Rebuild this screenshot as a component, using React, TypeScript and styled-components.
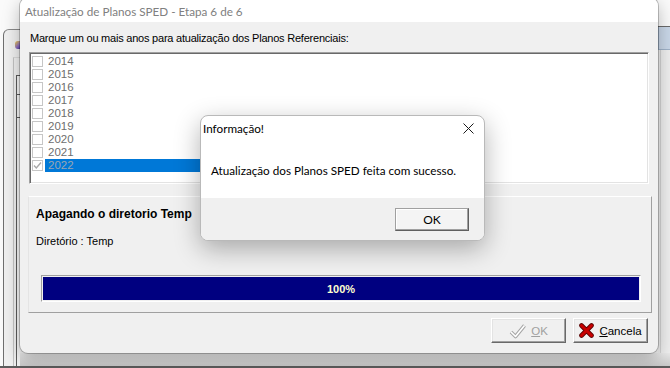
import React from "react";
import styled, { createGlobalStyle } from "styled-components";

const GlobalStyle = createGlobalStyle`
  html, body {
    margin: 0;
    padding: 0;
  }
  body {
    width: 670px;
    height: 368px;
    overflow: hidden;
    background: #f0f0f0;
  }
`;

const Screen = styled.div`
  position: relative;
  width: 670px;
  height: 368px;
  overflow: hidden;
  font-family: "Liberation Sans", Arial, sans-serif;
`;

/* ---------- application behind the dialogs ---------- */

const Backdrop = styled.div`
  display: grid;
  width: 100%;
  height: 100%;
  grid-template-columns: 20px 1fr 12px;
  grid-template-rows: 1fr 13px 2px;
  grid-template-areas:
    "left mid right"
    "left shade shade"
    "line line line";
  background: #f0f0f0;
`;

const LeftRail = styled.div`
  grid-area: left;
  display: flex;
  flex-direction: column;
  background: #fafafa;
`;

const RailTab = styled.div`
  flex: 1;
  margin: 29px 0 0 3px;
  display: flex;
  flex-direction: column;
  padding-left: 9px;
  background: #f0f0f0;
  border-left: 1px solid #6f6f6f;
  border-top: 1px solid #8a8a8a;
  border-top-left-radius: 6px;
`;

const RailIcon = styled.div`
  width: 6px;
  height: 8px;
  margin: 11px 0 0 2px;
  border-radius: 3px 0 0 3px;
  background: linear-gradient(135deg, #f2d24a 0%, #8a6bc4 60%, #4b3a8c 100%);
`;

const RailPanel = styled.div`
  flex: 1;
  margin-top: 8px;
  display: flex;
  flex-direction: column;
  border-left: 1px solid #c4c4c4;
  border-top: 1px solid #dadada;
  padding-left: 2px;
`;

const RailGrid = styled.div`
  flex: 1;
  margin-top: 17px;
  display: flex;
  flex-direction: column;
  gap: 22px;
  padding-top: 18px;
  border-left: 1px solid #5a5a5a;
  border-top: 1px solid #5a5a5a;
  background: #f4f4f4;
`;

const RailTick = styled.div`
  width: 3px;
  height: 1px;
  background: #5a5a5a;
`;

const RightRail = styled.div`
  grid-area: right;
  display: flex;
  flex-direction: column;
  background: #ececec;
`;

const RightTop = styled.div`
  height: 26px;
  background: #fafafa;
  border-bottom: 1px solid #6a6a6a;
`;

const RightTab = styled.div`
  height: 22px;
  background: #c9d7e8;
  border-left: 1px solid #9fb2c8;
  border-bottom: 1px solid #9fb2c8;
`;

const RightBody = styled.div`
  flex: 1;
  margin-left: 2px;
  border-left: 1px solid #d4d4d4;
  background: #eeeeee;
`;

const Shade = styled.div`
  grid-area: shade;
  background: linear-gradient(to bottom, #e9e9e9, #c9c9c9);
`;

const BottomLine = styled.div`
  grid-area: line;
  background: #5c5c5c;
`;

/* ---------- main wizard window ---------- */

const Window = styled.div`
  position: absolute;
  left: 20px;
  top: -2px;
  width: 638px;
  height: 355px;
  display: flex;
  flex-direction: column;
  border-radius: 8px;
  overflow: hidden;
  background: #f0f0f0;
  box-shadow: 0 0 0 1px rgba(0, 0, 0, 0.22), 0 6px 18px rgba(0, 0, 0, 0.28);
`;

const TitleBar = styled.div`
  height: 24px;
  flex: none;
  display: flex;
  align-items: center;
  padding: 2px 0 0 5px;
  box-sizing: border-box;
  background: #ffffff;
  color: #808080;
  font-family: Lato, "Noto Sans", sans-serif;
  font-size: 11.7px;
`;

const Body = styled.div`
  flex: 1;
  display: flex;
  flex-direction: column;
  font-size: 11px;
  color: #000;
`;

const Prompt = styled.div`
  margin: 9px 0 0 10px;
  line-height: 14px;
  letter-spacing: -0.22px;
`;

const ListBox = styled.div`
  margin: 7px 9px 0 9px;
  height: 132px;
  box-sizing: border-box;
  padding: 2px 2px;
  background: #ffffff;
  border: 1px solid;
  border-color: #a0a0a0 #ffffff #ffffff #a0a0a0;
  box-shadow: inset 1px 1px 0 #696969, inset -1px -1px 0 #e3e3e3;
  overflow: hidden;
`;

const ListRow = styled.div`
  height: 13px;
  display: flex;
  align-items: center;
`;

const CheckBox = styled.div`
  width: 11px;
  height: 11px;
  flex: none;
  box-sizing: border-box;
  border: 1px solid #c6c6c6;
  background: #ffffff;
  display: flex;
  align-items: center;
  justify-content: center;
`;

const YearLabel = styled.div<{ $selected?: boolean }>`
  margin-left: 2px;
  width: 300px;
  height: 13px;
  line-height: 13px;
  padding-left: 3px;
  font-size: 11.5px;
  color: ${(p) => (p.$selected ? "#9aa6b2" : "#6e6e6e")};
  background: ${(p) => (p.$selected ? "#0078d7" : "transparent")};
`;

const Panel = styled.div`
  margin: 12px 6px 0 8px;
  height: 117px;
  box-sizing: border-box;
  padding: 10px 10px 0 7px;
  display: flex;
  flex-direction: column;
  border: 1px solid;
  border-color: #ffffff #a0a0a0 #a0a0a0 #e4e4e4;
`;

const PanelTitle = styled.div`
  font-weight: bold;
  font-size: 12px;
  line-height: 14px;
`;

const PanelText = styled.div`
  margin-top: 13px;
  line-height: 14px;
`;

const Progress = styled.div`
  margin: 27px 0 0 5px;
  height: 27px;
  box-sizing: border-box;
  padding: 1px;
  border: 1px solid;
  border-color: #a0a0a0 #ffffff #ffffff #a0a0a0;
`;

const ProgressFill = styled.div`
  height: 100%;
  display: flex;
  align-items: center;
  justify-content: center;
  background: #000080;
  color: #ffffd0;
  font-weight: bold;
  font-size: 11px;
`;

const ButtonRow = styled.div`
  margin-top: 5px;
  padding-right: 10px;
  display: flex;
  justify-content: flex-end;
  gap: 7px;
`;

const ClassicButton = styled.button<{ $disabled?: boolean }>`
  width: 75px;
  height: 25px;
  box-sizing: border-box;
  padding: 0;
  display: flex;
  align-items: center;
  justify-content: center;
  gap: 5px;
  background: #f0f0f0;
  border: 1px solid;
  border-color: #ffffff #696969 #696969 #ffffff;
  box-shadow: inset -1px -1px 0 #a0a0a0, inset 1px 1px 0 #e3e3e3;
  font-family: "Liberation Sans", Arial, sans-serif;
  font-size: 11.5px;
  color: ${(p) => (p.$disabled ? "#a0a0a0" : "#000")};
`;

/* ---------- message box ---------- */

const MessageBox = styled.div`
  position: absolute;
  left: 200px;
  top: 115px;
  width: 285px;
  height: 126px;
  box-sizing: border-box;
  display: flex;
  flex-direction: column;
  border: 1px solid #b9b9b9;
  border-radius: 8px;
  overflow: hidden;
  background: #ffffff;
  box-shadow: 0 8px 26px rgba(0, 0, 0, 0.3);
  font-family: Lato, "Noto Sans", sans-serif;
  font-size: 11.7px;
  color: #000;
`;

const MsgTitle = styled.div`
  height: 24px;
  flex: none;
  display: flex;
  align-items: center;
  justify-content: space-between;
  padding: 0 10px 0 2px;
`;

const MsgContent = styled.div`
  height: 58px;
  flex: none;
  padding: 23px 0 0 10px;
  box-sizing: border-box;
`;

const MsgFooter = styled.div`
  flex: 1;
  display: flex;
  justify-content: flex-end;
  align-items: flex-start;
  padding: 10px 15px 0 0;
  background: #f0f0f0;
`;

const MsgButton = styled.button`
  width: 74px;
  height: 23px;
  box-sizing: border-box;
  padding: 0;
  background: #f4f4f4;
  border: 1px solid;
  border-color: #a0a0a0 #5f5f5f #5f5f5f #a0a0a0;
  box-shadow: inset -1px -1px 0 #a0a0a0, inset 1px 1px 0 #ffffff;
  font-family: Lato, "Noto Sans", sans-serif;
  font-size: 12px;
  color: #000;
`;

const years = ["2014", "2015", "2016", "2017", "2018", "2019", "2020", "2021", "2022"];

const CheckMark = () => (
  <svg width="9" height="9" viewBox="0 0 9 9">
    <path d="M1 4.5 L3.3 7 L8 1.5" fill="none" stroke="#a8a8a8" strokeWidth="1.4" />
  </svg>
);

const OkGlyph = () => (
  <svg width="17" height="16" viewBox="0 0 17 16">
    <path d="M2 9 L6.5 13.5 L15.5 2.5" fill="none" stroke="#a6a6a6" strokeWidth="3.6" strokeLinejoin="round" />
    <path d="M2 9 L6.5 13.5 L15.5 2.5" fill="none" stroke="#ffffff" strokeWidth="1.6" strokeLinejoin="round" />
  </svg>
);

const CancelGlyph = () => (
  <svg width="15" height="15" viewBox="0 0 15 15">
    <path d="M2.5 2.5 L12.5 12.5 M12.5 2.5 L2.5 12.5" stroke="#5a0000" strokeWidth="4.6" strokeLinecap="round" />
    <path d="M2.5 2.5 L12.5 12.5 M12.5 2.5 L2.5 12.5" stroke="#c80000" strokeWidth="3" strokeLinecap="round" />
  </svg>
);

const CloseGlyph = () => (
  <svg width="11" height="11" viewBox="0 0 11 11">
    <path d="M0.5 0.5 L10.5 10.5 M10.5 0.5 L0.5 10.5" stroke="#1a1a1a" strokeWidth="1" />
  </svg>
);

const App: React.FC = () => {
  return (
    <Screen>
      <GlobalStyle />
      <Backdrop>
        <LeftRail>
          <RailTab>
            <RailIcon />
            <RailPanel>
              <RailGrid>
                <RailTick />
                <RailTick />
              </RailGrid>
            </RailPanel>
          </RailTab>
        </LeftRail>
        <RightRail>
          <RightTop />
          <RightTab />
          <RightBody />
        </RightRail>
        <Shade />
        <BottomLine />
      </Backdrop>

      <Window>
        <TitleBar>Atualização de Planos SPED - Etapa 6 de 6</TitleBar>
        <Body>
          <Prompt>Marque um ou mais anos para atualização dos Planos Referenciais:</Prompt>
          <ListBox>
            {years.map((year) => {
              const selected = year === "2022";
              return (
                <ListRow key={year}>
                  <CheckBox>{selected && <CheckMark />}</CheckBox>
                  <YearLabel $selected={selected}>{year}</YearLabel>
                </ListRow>
              );
            })}
          </ListBox>
          <Panel>
            <PanelTitle>Apagando o diretorio Temp</PanelTitle>
            <PanelText>Diretório : Temp</PanelText>
            <Progress>
              <ProgressFill>100%</ProgressFill>
            </Progress>
          </Panel>
          <ButtonRow>
            <ClassicButton $disabled>
              <OkGlyph />
              <span>
                <u>O</u>K
              </span>
            </ClassicButton>
            <ClassicButton>
              <CancelGlyph />
              <span>
                <u>C</u>ancela
              </span>
            </ClassicButton>
          </ButtonRow>
        </Body>
      </Window>

      <MessageBox>
        <MsgTitle>
          <span>Informação!</span>
          <CloseGlyph />
        </MsgTitle>
        <MsgContent>Atualização dos Planos SPED feita com sucesso.</MsgContent>
        <MsgFooter>
          <MsgButton>OK</MsgButton>
        </MsgFooter>
      </MessageBox>
    </Screen>
  );
};

export default App;
